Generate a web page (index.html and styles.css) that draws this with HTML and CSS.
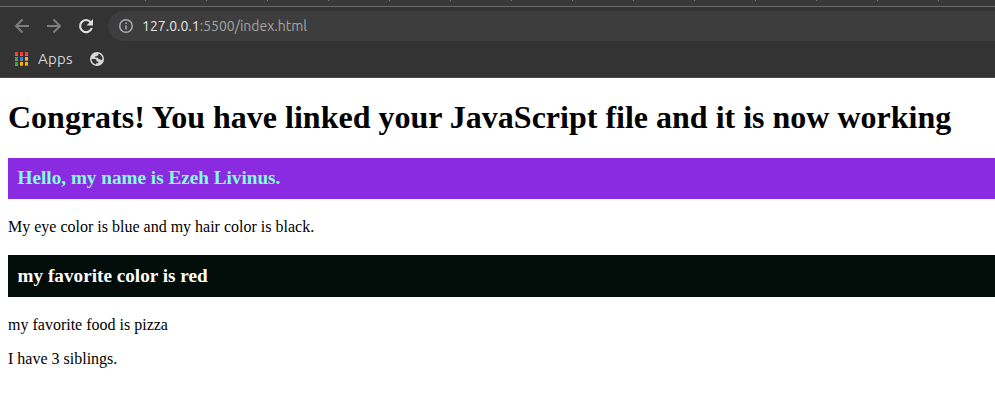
FILE: index.html
```html
<!DOCTYPE html>
<html lang="en">
<head>
<meta charset="utf-8">
<title>index.html</title>
<link rel="stylesheet" href="styles.css">
</head>
<body>
<header class="browser">
  <div class="tabstrip"></div>
  <div class="toolbar">
    <svg class="icon dim" viewBox="0 0 16 16"><path d="M15 8H2.500M8.500 1.500L2 8L8.500 14.500"/></svg>
    <svg class="icon dim" viewBox="0 0 16 16"><path d="M1 8h12.500M7.500 1.500L14 8L7.500 14.500"/></svg>
    <svg class="icon reload" viewBox="0 0 16 16"><path d="M12.700 4.200A6 6 0 1 0 13.800 10"/><path class="solid" d="M15 1v6.500H8.500z"/></svg>
    <div class="address">
      <svg class="info" viewBox="0 0 14 14"><circle cx="7" cy="7" r="6.25"/><path d="M7 6.2v4.3M7 3.4v1.5"/></svg>
      <span class="url"><span class="host">127.0.0.1</span>:5500/index.html</span>
    </div>
  </div>
  <nav class="bookmarks">
    <span class="apps-grid"><i class="red"></i><i class="red"></i><i class="red"></i><i class="green"></i><i class="blue"></i><i class="yellow"></i><i class="green"></i><i class="yellow"></i><i class="yellow"></i></span>
    <span class="apps-label">Apps</span>
    <svg class="globe" viewBox="0 0 14 14"><circle cx="7" cy="7" r="7"/><path d="M1.500 7.100H4.600C5.800 7.100 6.600 7.700 6.600 8.800V9.400H8.300V11.200H6V12.500C3.500 12.100 1.600 10 1.500 7.100zM8.500 1.700V2.800L7 4.200H5.200V5.700H7.300C8.200 5.700 8.400 6.300 8.600 7.200H10.500V8.200L12.400 7.500C12.800 4.800 11 2.300 8.500 1.700z"/></svg>
  </nav>
</header>
<main class="page">
  <h1>Congrats! You have linked your JavaScript file and it is now working</h1>
  <h3 class="greeting">Hello, my name is Ezeh Livinus.</h3>
  <p>My eye color is blue and my hair color is black.</p>
  <h3 class="favorite">my favorite color is red</h3>
  <p>my favorite food is pizza</p>
  <p>I have 3 siblings.</p>
</main>
</body>
</html>
```

FILE: styles.css
```css
* { box-sizing: border-box; }
body { margin: 0; background: #fff; overflow: hidden; font-family: "Liberation Serif", serif; font-size: 16px; color: #000; }
.browser { height: 78px; background: #333; border-bottom: 1px solid #494949; font-family: Ubuntu, "Noto Sans", sans-serif; }
.tabstrip {
  height: 7px;
  border-bottom: 1px solid #696969;
  background: repeating-linear-gradient(to right, transparent 0 60px, #777 60px 61px) 85px 0 / 915px 1px no-repeat, #383838;
}
.toolbar { display: flex; align-items: center; height: 38px; padding-left: 14px; gap: 16px; }
.icon { width: 16px; height: 16px; flex: none; fill: none; stroke: #dedede; stroke-width: 2.1; }
.dim { stroke: #7d7d7d; stroke-width: 2; }
.icon .solid { fill: #dedede; stroke: none; }
.address { flex: 1; height: 30px; margin-left: -2px; display: flex; align-items: center; gap: 9px; padding-left: 11px; border-radius: 15px 0 0 15px; background: #3d3d3d; }
.info { width: 14px; height: 14px; fill: none; stroke: #a9adb2; stroke-width: 1.5; }
.url { font-size: 14px; line-height: 20px; color: #a5a5a5; }
.host { color: #e4e4e4; }
.bookmarks { display: flex; align-items: center; height: 28px; padding-left: 15px; }
.apps-grid { display: grid; grid-template-columns: repeat(3, 3px); grid-auto-rows: 4px; gap: 1px 2px; }
.apps-grid i { border-bottom: 1px solid #8b8b8b; }
.red { background: #f53b36; }
.green { background: #33a35a; }
.blue { background: #2583ee; }
.yellow { background: #fbb30a; }
.apps-label { margin-left: 10px; width: 35px; font-size: 15px; letter-spacing: 0.2px; line-height: 20px; color: #d5d5d5; }
.globe { width: 14px; height: 14px; margin-left: 17px; fill: #dadada; }
.globe path { fill: #333; }
.page { display: flow-root; padding-left: 8px; }
h1 { margin: 21.44px 0; font-size: 32px; line-height: 37px; white-space: nowrap; }
h3 { margin: 1em 0; padding: 0.5em; font-size: 1.2em; line-height: 22px; }
p { margin: 16px 0; line-height: 18px; }
.greeting { background: #8a2be2; color: #7fffd4; }
.favorite { background: #020c08; color: #fff; }
```
